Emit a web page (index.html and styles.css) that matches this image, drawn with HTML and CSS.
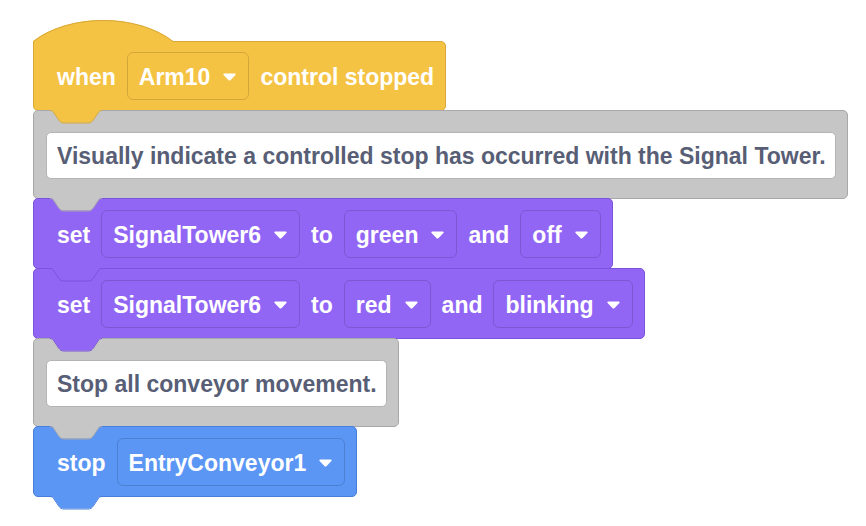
FILE: index.html
```html
<!DOCTYPE html>
<html lang="en">
<head>
  <meta charset="UTF-8" />
  <title>Signal Tower stop</title>
  <link rel="stylesheet" href="styles.css">
</head>
<body>

  <div class="stack">

    <div class="block hat events">
      <svg class="cap" width="142" height="24" viewBox="0 0 142 24">
        <path class="fill" d="M0,24 V22 C36,-6 104,-6 140,22 V24 Z" />
        <path class="line" d="M0.5,24 V22.5 C36,-5.5 104,-5.5 140,22.5" />
      </svg>
      <span class="label">when</span>
      <div class="field">Arm10 <svg class="arrow" width="13" height="8" viewBox="0 0 13 8"><path d="M1.2,0.5 H11.8 C12.6,0.5 13,1.4 12.4,2 L7.4,7.2 C6.9,7.7 6.1,7.7 5.6,7.2 L0.6,2 C0,1.4 0.4,0.5 1.2,0.5 Z" /></svg></div>
      <span class="label">control stopped</span>
      <svg class="tab" width="54" height="15" viewBox="0 0 54 15">
        <path class="fill" d="M0,0 C2,0 3,1 4,2.5 L9,10 C10,11.5 11.5,12.5 14,12.5 H38 C40.5,12.5 42,11.5 43,10 L48,2.5 C49,1 50,0 52,0 Z" />
        <path class="line" d="M0,0.5 C2,0.5 3,1.5 4,3 L9,10.5 C10,12 11.5,13 14,13 H38 C40.5,13 42,12 43,10.5 L48,3 C49,1.5 50,0.5 52,0.5" />
      </svg>
    </div>

    <div class="block comment">
      <div class="note">Visually indicate a controlled stop has occurred with the Signal Tower.</div>
      <svg class="tab" width="54" height="15" viewBox="0 0 54 15">
        <path class="fill" d="M0,0 C2,0 3,1 4,2.5 L9,10 C10,11.5 11.5,12.5 14,12.5 H38 C40.5,12.5 42,11.5 43,10 L48,2.5 C49,1 50,0 52,0 Z" />
        <path class="line" d="M0,0.5 C2,0.5 3,1.5 4,3 L9,10.5 C10,12 11.5,13 14,13 H38 C40.5,13 42,12 43,10.5 L48,3 C49,1.5 50,0.5 52,0.5" />
      </svg>
    </div>

    <div class="block looks">
      <span class="label">set</span>
      <div class="field">SignalTower6 <svg class="arrow" width="13" height="8" viewBox="0 0 13 8"><path d="M1.2,0.5 H11.8 C12.6,0.5 13,1.4 12.4,2 L7.4,7.2 C6.9,7.7 6.1,7.7 5.6,7.2 L0.6,2 C0,1.4 0.4,0.5 1.2,0.5 Z" /></svg></div>
      <span class="label">to</span>
      <div class="field">green <svg class="arrow" width="13" height="8" viewBox="0 0 13 8"><path d="M1.2,0.5 H11.8 C12.6,0.5 13,1.4 12.4,2 L7.4,7.2 C6.9,7.7 6.1,7.7 5.6,7.2 L0.6,2 C0,1.4 0.4,0.5 1.2,0.5 Z" /></svg></div>
      <span class="label">and</span>
      <div class="field">off <svg class="arrow" width="13" height="8" viewBox="0 0 13 8"><path d="M1.2,0.5 H11.8 C12.6,0.5 13,1.4 12.4,2 L7.4,7.2 C6.9,7.7 6.1,7.7 5.6,7.2 L0.6,2 C0,1.4 0.4,0.5 1.2,0.5 Z" /></svg></div>
      <svg class="tab" width="54" height="15" viewBox="0 0 54 15">
        <path class="fill" d="M0,0 C2,0 3,1 4,2.5 L9,10 C10,11.5 11.5,12.5 14,12.5 H38 C40.5,12.5 42,11.5 43,10 L48,2.5 C49,1 50,0 52,0 Z" />
        <path class="line" d="M0,0.5 C2,0.5 3,1.5 4,3 L9,10.5 C10,12 11.5,13 14,13 H38 C40.5,13 42,12 43,10.5 L48,3 C49,1.5 50,0.5 52,0.5" />
      </svg>
    </div>

    <div class="block looks">
      <span class="label">set</span>
      <div class="field">SignalTower6 <svg class="arrow" width="13" height="8" viewBox="0 0 13 8"><path d="M1.2,0.5 H11.8 C12.6,0.5 13,1.4 12.4,2 L7.4,7.2 C6.9,7.7 6.1,7.7 5.6,7.2 L0.6,2 C0,1.4 0.4,0.5 1.2,0.5 Z" /></svg></div>
      <span class="label">to</span>
      <div class="field">red <svg class="arrow" width="13" height="8" viewBox="0 0 13 8"><path d="M1.2,0.5 H11.8 C12.6,0.5 13,1.4 12.4,2 L7.4,7.2 C6.9,7.7 6.1,7.7 5.6,7.2 L0.6,2 C0,1.4 0.4,0.5 1.2,0.5 Z" /></svg></div>
      <span class="label">and</span>
      <div class="field">blinking <svg class="arrow" width="13" height="8" viewBox="0 0 13 8"><path d="M1.2,0.5 H11.8 C12.6,0.5 13,1.4 12.4,2 L7.4,7.2 C6.9,7.7 6.1,7.7 5.6,7.2 L0.6,2 C0,1.4 0.4,0.5 1.2,0.5 Z" /></svg></div>
      <svg class="tab" width="54" height="15" viewBox="0 0 54 15">
        <path class="fill" d="M0,0 C2,0 3,1 4,2.5 L9,10 C10,11.5 11.5,12.5 14,12.5 H38 C40.5,12.5 42,11.5 43,10 L48,2.5 C49,1 50,0 52,0 Z" />
        <path class="line" d="M0,0.5 C2,0.5 3,1.5 4,3 L9,10.5 C10,12 11.5,13 14,13 H38 C40.5,13 42,12 43,10.5 L48,3 C49,1.5 50,0.5 52,0.5" />
      </svg>
    </div>

    <div class="block comment">
      <div class="note">Stop all conveyor movement.</div>
      <svg class="tab" width="54" height="15" viewBox="0 0 54 15">
        <path class="fill" d="M0,0 C2,0 3,1 4,2.5 L9,10 C10,11.5 11.5,12.5 14,12.5 H38 C40.5,12.5 42,11.5 43,10 L48,2.5 C49,1 50,0 52,0 Z" />
        <path class="line" d="M0,0.5 C2,0.5 3,1.5 4,3 L9,10.5 C10,12 11.5,13 14,13 H38 C40.5,13 42,12 43,10.5 L48,3 C49,1.5 50,0.5 52,0.5" />
      </svg>
    </div>

    <div class="block motion">
      <span class="label">stop</span>
      <div class="field">EntryConveyor1 <svg class="arrow" width="13" height="8" viewBox="0 0 13 8"><path d="M1.2,0.5 H11.8 C12.6,0.5 13,1.4 12.4,2 L7.4,7.2 C6.9,7.7 6.1,7.7 5.6,7.2 L0.6,2 C0,1.4 0.4,0.5 1.2,0.5 Z" /></svg></div>
      <svg class="tab" width="54" height="15" viewBox="0 0 54 15">
        <path class="fill" d="M0,0 C2,0 3,1 4,2.5 L9,10 C10,11.5 11.5,12.5 14,12.5 H38 C40.5,12.5 42,11.5 43,10 L48,2.5 C49,1 50,0 52,0 Z" />
        <path class="line" d="M0,0.5 C2,0.5 3,1.5 4,3 L9,10.5 C10,12 11.5,13 14,13 H38 C40.5,13 42,12 43,10.5 L48,3 C49,1.5 50,0.5 52,0.5" />
      </svg>
    </div>

  </div>

</body>
</html>
```

FILE: styles.css
```css
body {
  margin: 0;
  background: white;
  font-family: 'Liberation Sans', Arial, sans-serif;
  font-weight: bold;
  font-size: 23px;
  color: white;
}

.stack {
  display: flex;
  flex-direction: column;
  align-items: flex-start;
  padding: 41px 0 20px 33px;
}

.block {
  position: relative;
  display: flex;
  align-items: center;
  gap: 11px;
  padding: 11px 11px 10px 23px;
  border: 1px solid;
  border-radius: 5px;
  margin-top: -1px;
}

.block:first-child {
  margin-top: 0;
}

.label {
  white-space: nowrap;
  padding-top: 2px;
}

.field {
  display: flex;
  align-items: center;
  gap: 13px;
  height: 48px;
  box-sizing: border-box;
  padding: 2px 12px 0 11px;
  border: 1px solid rgba(0,0,0,0.14);
  border-radius: 6px;
  white-space: nowrap;
}

.arrow {
  margin-top: -1px;
}

.arrow path {
  fill: white;
}

/* bottom tab that sits in the next block */
.tab {
  position: absolute;
  left: 16px;
  top: 100%;
  z-index: 1;
  overflow: visible;
}

.tab .line, .cap .line {
  fill: none;
  stroke-width: 1;
}

.cap {
  position: absolute;
  left: -1px;
  top: -23px;
}

.hat {
  padding: 10px 11px 10px 23px;
  border-top-left-radius: 0;
}

.events {
  background: #f5c344;
  border-color: #d8a93a;
}

.events .fill { fill: #f5c344; }
.events .line { stroke: #d8a93a; }

.comment {
  background: #c6c6c6;
  border-color: #a8a8a8;
  padding: 21px 11px 19px 12px;
}

.comment .fill { fill: #c6c6c6; }
.comment .line { stroke: #a8a8a8; }

.note {
  background: white;
  color: #575e75;
  height: 47px;
  box-sizing: border-box;
  display: flex;
  align-items: center;
  padding: 2px 9px 0 10px;
  border: 1px solid #b4b4b4;
  border-radius: 5px;
  white-space: nowrap;
}

.looks {
  background: #9166f5;
  border-color: #7b53db;
}

.looks .fill { fill: #9166f5; }
.looks .line { stroke: #7b53db; }

.motion {
  background: #5b96f5;
  border-color: #4a7fd9;
}

.motion .fill { fill: #5b96f5; }
.motion .line { stroke: #4a7fd9; }
```
